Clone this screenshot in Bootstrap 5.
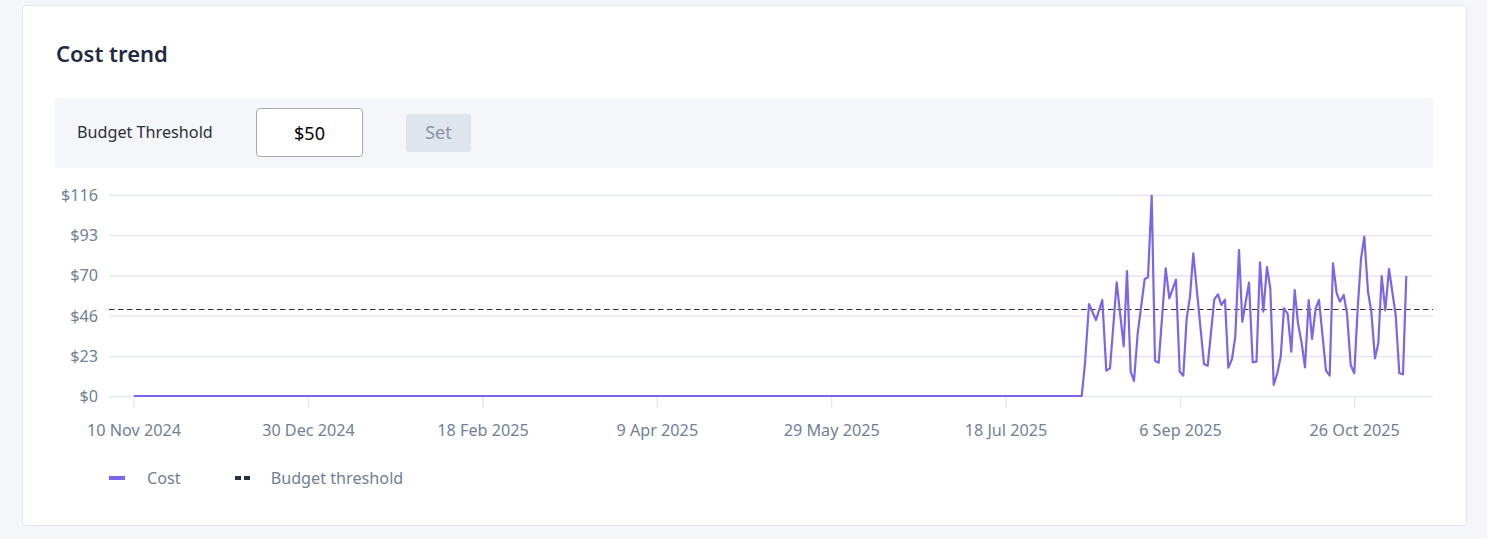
<!DOCTYPE html>
<html lang="en">
<head>
<meta charset="utf-8">
<title>Cost trend</title>
<link href="https://cdn.jsdelivr.net/npm/bootstrap@5.3.0/dist/css/bootstrap.min.css" rel="stylesheet">
<style>
html,body{height:539px;overflow:hidden}
body{background:#f5f6fa;font-family:"Noto Sans",sans-serif;padding:5px 20px 0 22px}
.cost-card{height:521px;border:1px solid #e3e6ee;border-radius:4px;background:#fff;padding:31px 33px 0 32px}
.cost-title{font-size:22px;font-weight:600;line-height:32px;color:#1f2a44;margin:0 0 29px 0;padding-left:1px}
.budget-bar{height:70px;background:#f5f6fa;border-radius:2px;padding-left:22px}
.budget-label{font-size:16.2px;line-height:22px;color:#2c2f36;width:179px;margin:0 0 2px 0}
.budget-input{width:107px;height:49px;border:1px solid #a9a9a9;border-radius:4px;font-size:18px;color:#000;text-align:center;padding:0;background:#fff;font-family:inherit;margin-bottom:1px}
.btn.budget-set,.btn.budget-set:disabled{width:65px;height:38px;margin-left:43px;padding:0 0 2px 0;border:0;border-radius:3px;background:#e0e4ec;color:#8a94a3;font-size:18px;opacity:1}
.chart-svg{display:block;width:1378px;height:260px;margin-top:12px}
.chart-svg text{font-family:"Noto Sans",sans-serif;font-size:16.2px;fill:#718096}
.chart-legend{font-size:16.2px;color:#718096;margin:27px 0 0 54px;line-height:22px}
.swatch-cost{width:16px;height:4px;background:#7b66e8;margin-right:22px}
.swatch-budget{width:15px;height:4px;margin:0 21px 0 54px;background:linear-gradient(90deg,#27323f 0 6px,transparent 6px 9px,#27323f 9px 15px)}
</style>
</head>
<body>
<div class="cost-card">
  <h2 class="cost-title">Cost trend</h2>
  <div class="budget-bar d-flex align-items-center">
    <label class="budget-label" for="budget">Budget Threshold</label>
    <input id="budget" class="budget-input" type="text" value="$50">
    <button class="btn budget-set" type="button" disabled>Set</button>
  </div>
  <svg class="chart-svg" viewBox="55 180 1378 260" role="img" aria-label="Cost trend chart">
    <g stroke="#e3e6f0" stroke-width="1.3" fill="none">
      <path d="M109 195.5H1433M109 235.7H1433M109 276H1433M109 316.2H1433M109 356.5H1433M109 396.5H1433"/>
      <path d="M134 397V408M308.5 397V408M483 397V408M657.3 397V408M831.7 397V408M1006 397V408M1180.5 397V408M1354.7 397V408"/>
    </g>
    <path d="M109 309.5H1433" stroke="#2b2f36" stroke-width="1.2" stroke-dasharray="5.5 3.5" fill="none"/>
    <polyline fill="none" stroke="#7b66e8" stroke-width="2.2" stroke-linejoin="round" points="134,396 1081.7,396 1085,363.3 1089,304 1096,320 1102.3,300 1106.3,370.7 1110,368.3 1116.7,282.3 1123.7,346.3 1127,271 1130.7,371.7 1134,381 1137.7,333.3 1144.7,279 1148,277.3 1151.7,195.7 1155,360.7 1158.7,362.7 1165.7,268.3 1169.3,298.3 1176,279.7 1179.7,371.7 1183.3,375.7 1186.7,318.3 1190,296.7 1193.3,253.3 1204,364 1207.7,365.7 1214.3,299.3 1218,294.3 1221.3,305 1225,299.7 1228.3,367.7 1232,359 1235.3,336.7 1239,250 1242.3,321.7 1249,282.7 1252.7,362.3 1256.5,361.7 1260,262.3 1263.3,311.7 1267,267 1270.3,288.3 1273.7,385 1277.3,373.3 1280.7,356.7 1284,308.3 1287.7,314 1291.3,351.7 1294.7,290 1298,323.3 1301.7,343.3 1305,367.3 1308.7,300 1312,339 1315.7,308.3 1319,300 1326,370.7 1329.7,375.7 1333,263.3 1336.7,293.3 1340,301.7 1343.7,295 1347,313.3 1350.7,365 1354.3,373.3 1357.7,308.3 1361,259 1364.3,236.7 1368,291.7 1371.3,311.7 1375,358.3 1378.3,343.3 1381.7,276 1385.3,310.3 1389,269 1395.7,315 1399.3,373.3 1403,374.3 1406.3,276"/>
    <g text-anchor="end">
      <text x="98" y="201">$116</text>
      <text x="98" y="241">$93</text>
      <text x="98" y="281">$70</text>
      <text x="98" y="322">$46</text>
      <text x="98" y="362">$23</text>
      <text x="98" y="402">$0</text>
    </g>
    <g text-anchor="middle">
      <text x="134" y="436">10 Nov 2024</text>
      <text x="308.5" y="436">30 Dec 2024</text>
      <text x="483" y="436">18 Feb 2025</text>
      <text x="657.3" y="436">9 Apr 2025</text>
      <text x="831.7" y="436">29 May 2025</text>
      <text x="1006" y="436">18 Jul 2025</text>
      <text x="1180.5" y="436">6 Sep 2025</text>
      <text x="1354.7" y="436">26 Oct 2025</text>
    </g>
  </svg>
  <div class="chart-legend d-flex align-items-center">
    <span class="swatch-cost"></span><span>Cost</span>
    <span class="swatch-budget"></span><span>Budget threshold</span>
  </div>
</div>
<script src="https://cdn.jsdelivr.net/npm/bootstrap@5.3.0/dist/js/bootstrap.bundle.min.js"></script>
</body>
</html>
